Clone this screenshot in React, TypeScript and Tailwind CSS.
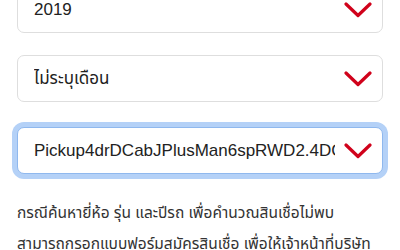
import React from 'react';

function Chevron() {
  return (
    <svg width="28" height="16" viewBox="0 0 28 16" className="shrink-0">
      <polyline points="2,2 14,13.5 26,2" fill="none" stroke="#d0021b" strokeWidth="3.2" strokeLinecap="round" strokeLinejoin="round" />
    </svg>
  );
}

function SelectBox({ value, focused, className }: { value: string; focused?: boolean; className?: string }) {
  return (
    <div
      className={`flex h-[47px] items-center rounded-[7px] border bg-white pl-[16px] pr-[9px] ${
        focused ? 'border-[#8fb8ee] shadow-[0_0_0_5px_#b4d1f7]' : 'border-[#dedede]'
      } ${className ?? ''}`}
    >
      <div className="flex-1 overflow-hidden whitespace-nowrap text-[17px] text-[#222]">{value}</div>
      <div className="ml-[8px] flex w-[30px] justify-center">
        <Chevron />
      </div>
    </div>
  );
}

export default function App() {
  return (
    <div
      className="h-[250px] w-[400px] overflow-hidden bg-white px-[17px]"
      style={{ fontFamily: '"Liberation Sans", "Noto Sans Thai", "Noto Sans", sans-serif' }}
    >
      <SelectBox value="2019" className="-mt-[14px]" />
      <SelectBox value="ไม่ระบุเดือน" className="mt-[22px]" />
      <SelectBox value="Pickup4drDCabJPlusMan6spRWD2.4DCT" focused className="mt-[25px]" />
      <p className="mt-[23px] text-[15.5px] leading-[31px] text-[#333]">
        กรณีค้นหายี่ห้อ รุ่น และปีรถ เพื่อคำนวณสินเชื่อไม่พบ
        <br />
        สามารถกรอกแบบฟอร์มสมัครสินเชื่อ เพื่อให้เจ้าหน้าที่บริษัท
      </p>
    </div>
  );
}
